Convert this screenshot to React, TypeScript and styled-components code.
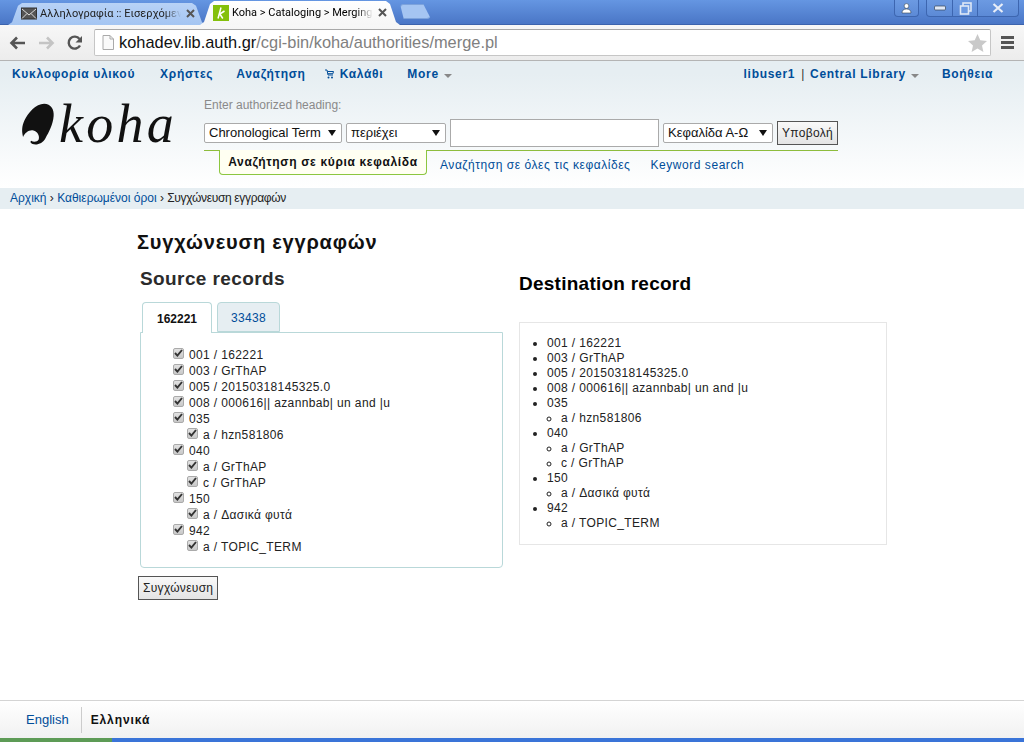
import React from "react";
import styled, { createGlobalStyle } from "styled-components";

const Global = createGlobalStyle`
  html, body { margin: 0; padding: 0; height: 100%; overflow: hidden; background: #fff; }
  body { font-family: "Liberation Sans", Arial, sans-serif; font-size: 12px; color: #000; }
  * { box-sizing: border-box; }
`;

const Page = styled.div`
  width: 1024px; height: 742px; display: flex; flex-direction: column; overflow: hidden;
`;

/* Browser chrome */
const TabStrip = styled.div`
  height: 25px; flex: none; display: flex; align-items: flex-end; padding-left: 8px;
  background: linear-gradient(#6596e2, #4a76c6); border-bottom: 1px solid #3c63ad;
  position: relative;
`;
const Tab = styled.div<{ $active?: boolean }>`
  height: ${p => (p.$active ? 24 : 22)}px; width: ${p => (p.$active ? 200 : 198)}px;
  margin-left: ${p => (p.$active ? -6 : 0)}px;
  margin-bottom: -1px; z-index: ${p => (p.$active ? 2 : 1)};
  padding: 0 ${p => (p.$active ? 12 : 10)}px 1px 13px;
  clip-path: polygon(0 100%, 4px 88%, 10px 12%, 14px 0, calc(100% - 14px) 0, calc(100% - 10px) 12%, calc(100% - 4px) 88%, 100% 100%);
  background: ${p => (p.$active ? "linear-gradient(#fff, #f6f6f6)" : "linear-gradient(#b8d2f6, #a4c5f2)")};
  display: flex; align-items: center; gap: 3px; color: ${p => (p.$active ? "#000" : "#222")};
`;
const TabTitle = styled.span`
  flex: 1; min-width: 0; white-space: nowrap; font-family: Roboto, sans-serif; font-size: 11px;
  -webkit-mask-image: linear-gradient(to right, #000 88%, transparent 100%);
  mask-image: linear-gradient(to right, #000 88%, transparent 100%);
`;
const TabClose = styled.span`
  flex: none; width: 12px; display: flex; align-items: center; justify-content: center;
`;
const NewTab = styled.div`
  width: 31px; height: 15px; margin: 0 0 5px 0; border-radius: 3px 3px 4px 4px;
  background: #a5c5f2; border: 1px solid #7da3dc;
  clip-path: polygon(0 0, 75% 0, 100% 100%, 12% 100%);
`;
const WinButtons = styled.div`
  position: absolute; right: 0; top: 0; display: flex; gap: 7px; padding-right: 5px;
`;
const WinGroup = styled.div`
  display: flex; height: 17px; border: 1px solid #3d66b0; border-top: 0; border-radius: 0 0 4px 4px;
  background: linear-gradient(#6c9ae2, #5c8ad6);
`;
const WinBtn = styled.div<{ $w: number }>`
  width: ${p => p.$w}px; display: flex; align-items: center; justify-content: center;
  & + & { border-left: 1px solid #3d66b0; }
`;

const Toolbar = styled.div`
  height: 36px; flex: none; display: flex; align-items: center;
  background: linear-gradient(#f7f7f7, #ececec); border-bottom: 1px solid #b4b4b4;
  padding: 0 9px 0 9px;
`;
const NavIcon = styled.div`
  width: 29px; height: 24px; display: flex; align-items: center; justify-content: flex-start;
`;
const Omnibox = styled.div`
  width: 897px; height: 27px; margin-left: -2px; display: flex; align-items: center;
  background: #fff; border: 1px solid #c6c6c6; border-top-color: #a8a8a8; border-radius: 2px;
  padding: 0 3px 0 7px; font-size: 16.4px;
`;
const UrlHost = styled.span`
  color: #111; margin-left: 5px;
`;
const UrlPath = styled.span`
  color: #808080; flex: 1;
`;
const Menu = styled.div`
  margin-left: 10px; width: 13px; display: flex; flex-direction: column; gap: 2px;
`;
const MenuBar = styled.i`
  display: block; height: 3px; background: #555;
`;

/* Koha header */
const HeaderWrap = styled.div`
  flex: none; height: 127px; background: linear-gradient(#e6eef2 0%, #e6eef2 10%, #ffffff 100%);
`;
const TopNav = styled.div`
  height: 26px; display: flex; align-items: center; padding: 0 31px 0 12px;
  font-weight: 700; font-size: 12px; letter-spacing: 0.7px;
`;
const TopLink = styled.a<{ $mr?: number }>`
  color: #004d99; text-decoration: none; margin-right: ${p => p.$mr ?? 0}px; white-space: nowrap;
  display: inline-flex; align-items: center;
`;
const Caret = styled.i`
  display: inline-block; width: 0; height: 0; margin: 3px 0 0 5px;
  border-left: 4px solid transparent; border-right: 4px solid transparent; border-top: 4px solid #888;
`;
const Spacer = styled.div`flex: 1;`;
const Pipe = styled.span`
  font-weight: 400; color: #333; margin: 0 5px 0 6px;
`;
const SearchArea = styled.div`
  display: flex; height: 101px;
`;
const LogoBox = styled.div`
  width: 204px; flex: none; display: flex; align-items: flex-start; padding: 16px 0 0 21px;
`;
const LogoText = styled.span`
  font-family: "Liberation Serif", serif; font-style: italic; font-size: 54px; line-height: 42px;
  letter-spacing: 3.3px; color: #111; margin-left: 4px;
`;
const SearchCol = styled.div`
  flex: none; width: 635px; display: flex; flex-direction: column;
`;
const SearchLabel = styled.div`
  color: #8a8a8a; font-size: 12px; padding-top: 10px; height: 25px; line-height: 16px;
`;
const SearchRow = styled.div`
  height: 38px; display: flex; align-items: center; padding-top: 4px; padding-bottom: 1px;
`;
const FakeSelect = styled.div<{ $w: number; $ml?: number }>`
  width: ${p => p.$w}px; height: 20px; margin-left: ${p => p.$ml ?? 0}px; flex: none;
  background: #fff; border: 1px solid #aaa; border-radius: 2px;
  display: flex; align-items: center; justify-content: space-between;
  padding: 0 5px 0 4px; font-size: 13px; white-space: nowrap; color: #111;
`;
const SelArrow = styled.i`
  width: 0; height: 0; border-left: 4px solid transparent; border-right: 4px solid transparent; border-top: 6px solid #111;
`;
const SearchInput = styled.div`
  width: 209px; height: 28px; margin-left: 4px; flex: none; background: #fff; border: 1px solid #aaa;
`;
const Button = styled.button<{ $ml?: number }>`
  height: 24px; margin-left: ${p => p.$ml ?? 0}px; padding: 0 4px; border: 1px solid #555; border-radius: 0;
  background: linear-gradient(#f9f9f9, #e4e4e4); font: 12px/1 "Liberation Sans", sans-serif; color: #222;
  letter-spacing: 0.3px; white-space: nowrap;
`;
const TabsLine = styled.div`
  display: flex; height: 26px; border-top: 1px solid #8dbc3c; margin-right: 1px; padding-left: 15px; border-radius: 0 0 4px 4px;
`;
const ActiveSearch = styled.div`
  width: 208px; height: 25px; margin-top: -1px; background: #fffff2; border: 1px solid #8cc63f; border-top: 0;
  border-radius: 0 0 4px 4px; font-weight: 700; font-size: 12px; letter-spacing: 0.66px; color: #111;
  display: flex; align-items: center; justify-content: center; white-space: nowrap;
`;
const SearchLink = styled.a<{ $ml: number }>`
  color: #004d99; margin-left: ${p => p.$ml}px; font-size: 12px; letter-spacing: 0.55px; line-height: 28px; white-space: nowrap;
`;

const Breadcrumb = styled.div`
  height: 21px; flex: none; background: #e6eef2; padding: 0 0 2px 10px; display: flex; align-items: center;
  font-size: 12px; color: #222; white-space: pre;
`;
const Crumb = styled.a`
  color: #004d99;
`;
const CrumbCurrent = styled.span`
  letter-spacing: -0.33px;
`;

/* Main */
const Main = styled.main`
  flex: 1; min-height: 0; padding: 20px 0 0 137px; position: relative;
`;
const H1 = styled.h1`
  margin: 0; font-size: 20px; line-height: 26px; font-weight: 700; color: #111; letter-spacing: 0.8px;
`;
const Columns = styled.div`
  display: flex; margin-top: 9px;
`;
const LeftCol = styled.div`
  width: 382px; flex: none;
`;
const RightCol = styled.div`
  width: 368px; flex: none;
`;
const H2Left = styled.h2`
  margin: 0 0 0 3px; font-size: 19px; line-height: 30px; font-weight: 700; color: #2b2b2b; letter-spacing: 0.4px;
`;
const H2Right = styled.h2`
  margin: 5px 0 0; font-size: 19px; line-height: 30px; font-weight: 700; color: #000; letter-spacing: 0.25px;
`;
const TabRow = styled.div`
  display: flex; gap: 5px; margin: 8px 0 0 5px; height: 31px; position: relative; z-index: 1;
`;
const RecTab = styled.div<{ $active?: boolean }>`
  height: ${p => (p.$active ? 31 : 30)}px; width: ${p => (p.$active ? 70 : 63)}px;
  padding-top: ${p => (p.$active ? 1 : 2)}px;
  border: 1px solid #b9d8d9; border-radius: 4px 4px 0 0; ${p => (p.$active ? "border-bottom: 0;" : "")}
  background: ${p => (p.$active ? "#fff" : "#e6eef2")};
  color: ${p => (p.$active ? "#111" : "#004d99")}; font-weight: ${p => (p.$active ? 700 : 400)};
  letter-spacing: ${p => (p.$active ? 0 : 0.3)}px;
  display: flex; align-items: center; justify-content: center; font-size: 12px;
`;
const TabPanel = styled.div`
  margin: -1px 0 0 3px; width: 363px; height: 236px; border: 1px solid #b9d8d9; border-radius: 0 0 4px 4px;
  padding: 14px 0 0 32px;
`;
const CheckRow = styled.div<{ $sub?: boolean }>`
  height: 16px; display: flex; align-items: center; padding-left: ${p => (p.$sub ? 14 : 0)}px;
  font-size: 12px; color: #222; white-space: pre; letter-spacing: 0.37px;
`;
const Check = styled.span`
  width: 11px; height: 11px; flex: none; margin: -4px 5px 0 0; border-radius: 2px; border: 1px solid #aaa;
  background: linear-gradient(#e2e2e2, #c8c8c8); display: flex; align-items: center; justify-content: center;
`;
const SubmitRow = styled.div`
  margin: 8px 0 0 1px;
`;
const RecordBox = styled.div`
  margin-top: 23px; width: 368px; height: 223px; border: 1px solid #e6e6e6; padding: 13px 0 0 27px;
`;
const UL = styled.ul`
  margin: 0; padding: 0; list-style: disc; font-size: 12px; line-height: 15px; color: #222; letter-spacing: 0.37px;
`;
const SubUL = styled.ul`
  margin: 0; padding: 0 0 0 14px; list-style: circle;
`;

const Footer = styled.footer`
  flex: none; height: 38px; display: flex; align-items: center; padding-left: 26px;
  background: linear-gradient(#fff, #f1f1f1); border-top: 1px solid #d4d4d4; font-size: 12px;
`;
const LangLink = styled.a`
  color: #004d99; padding-right: 12px; height: 26px; line-height: 26px; border-right: 1px solid #ccc; font-size: 13px;
`;
const LangCurrent = styled.b`
  margin-left: 9px; color: #111; letter-spacing: 0.9px;
`;
const Taskbar = styled.div`
  flex: none; height: 4px; display: flex; background: #3a74d8;
`;
const StartEdge = styled.div`
  width: 112px; background: #5d9b56;
`;

const CheckMark = () => (
  <svg width="9" height="8" viewBox="0 0 9 8"><path d="M1 4l2.400 2.600L8 1" fill="none" stroke="#333" strokeWidth="1.9" /></svg>
);
const CloseX = () => (
  <svg width="9" height="9" viewBox="0 0 9 9"><path d="M1 1l7 7M8 1L1 8" stroke="#555" strokeWidth="2" /></svg>
);

const fields: [string, boolean][] = [
  ["001 / 162221", false], ["003 / GrThAP", false], ["005 / 20150318145325.0", false],
  ["008 / 000616|| azannbab| un and |u", false], ["035", false], ["a / hzn581806", true],
  ["040", false], ["a / GrThAP", true], ["c / GrThAP", true], ["150", false],
  ["a / Δασικά φυτά", true], ["942", false], ["a / TOPIC_TERM", true],
];

const Mail = () => (
  <svg width="16" height="13" viewBox="0 0 16 13" style={{ flex: "none" }}>
    <rect x="0.5" y="1" width="15" height="11" fill="#555" stroke="#333" />
    <path d="M1 2l7 6 7-6M1 11.500l5-5M15 11.500l-5-5" fill="none" stroke="#ddd" />
  </svg>
);
const KohaFav = () => (
  <svg width="16" height="16" viewBox="0 0 16 16" style={{ flex: "none" }}>
    <rect width="16" height="16" fill="#84c00c" />
    <path d="M8 2.500L5 13.500M11.500 6L6.800 9l3 4.500" fill="none" stroke="#fff" strokeWidth="1.500" />
  </svg>
);

export default function App() {
  return (
    <Page>
      <Global />
      <TabStrip>
        <Tab><Mail /><TabTitle>Αλληλογραφία :: Εισερχόμεν</TabTitle><TabClose><CloseX /></TabClose></Tab>
        <Tab $active><KohaFav /><TabTitle>Koha &gt; Cataloging &gt; Merging r</TabTitle><TabClose><CloseX /></TabClose></Tab>
        <NewTab />
        <WinButtons>
          <WinGroup>
            <WinBtn $w={23}>
              <svg width="11" height="11" viewBox="0 0 11 11"><circle cx="5.500" cy="3" r="2.400" fill="#fff" stroke="#345" strokeWidth=".6" /><path d="M1 10c0-3 2-4 4.500-4s4.500 1 4.500 4z" fill="#fff" stroke="#345" strokeWidth=".6" /></svg>
            </WinBtn>
          </WinGroup>
          <WinGroup>
            <WinBtn $w={25}><svg width="12" height="6" viewBox="0 0 12 6"><rect x=".5" y="1" width="11" height="4" rx="1" fill="#dfe8f6" stroke="#345" strokeWidth=".7" /></svg></WinBtn>
            <WinBtn $w={25}><svg width="13" height="13" viewBox="0 0 13 13"><rect x="4" y="1" width="8" height="8" fill="none" stroke="#dfe8f6" strokeWidth="1.600" /><rect x="1.500" y="4" width="8" height="8" fill="#6c9ae2" stroke="#dfe8f6" strokeWidth="1.600" /></svg></WinBtn>
            <WinBtn $w={41}><svg width="12" height="10" viewBox="0 0 12 10"><path d="M1.500 1l9 8M10.500 1l-9 8" stroke="#e8eef8" strokeWidth="2.200" /></svg></WinBtn>
          </WinGroup>
        </WinButtons>
      </TabStrip>
      <Toolbar>
        <NavIcon>
          <svg width="17" height="14" viewBox="0 0 17 14"><path d="M8 1.500L2.500 7 8 12.500M3 7h13" fill="none" stroke="#555" strokeWidth="2.600" /></svg>
        </NavIcon>
        <NavIcon>
          <svg width="17" height="14" viewBox="0 0 17 14"><path d="M9 1.500L14.500 7 9 12.500M14 7H1" fill="none" stroke="#c4c4c4" strokeWidth="2.600" /></svg>
        </NavIcon>
        <NavIcon>
          <svg width="16" height="16" viewBox="0 0 16 16"><path d="M13 10.500A6 6 0 1 1 12.500 4" fill="none" stroke="#555" strokeWidth="2.400" /><path d="M15 1v6.500H8.500z" fill="#555" /></svg>
        </NavIcon>
        <Omnibox>
          <svg width="12" height="15" viewBox="0 0 12 15"><path d="M1 .5h7l3.500 3.500v10.500H1z" fill="#fafafa" stroke="#aaa" /><path d="M8 .5V4h3.500" fill="none" stroke="#aaa" /></svg>
          <UrlHost>kohadev.lib.auth.gr</UrlHost>
          <UrlPath>/cgi-bin/koha/authorities/merge.pl</UrlPath>
          <svg width="19" height="18" viewBox="0 0 19 18"><path d="M9.500 0l2.800 6.200 6.700.7-5 4.500 1.400 6.600-5.900-3.400L3.600 18 5 11.400 0 6.900l6.700-.7z" fill="#c9c9c9" /></svg>
        </Omnibox>
        <Menu><MenuBar /><MenuBar /><MenuBar /></Menu>
      </Toolbar>
      <HeaderWrap>
        <TopNav>
          <TopLink $mr={25}>Κυκλοφορία υλικού</TopLink>
          <TopLink $mr={23}>Χρήστες</TopLink>
          <TopLink $mr={19}>Αναζήτηση</TopLink>
          <TopLink $mr={24}>
            <svg width="9" height="10" viewBox="0 0 9 10" style={{ marginRight: 6 }}><path d="M0 1h2l1 5h5M2.500 2.500h6l-.6 2.200H3" fill="none" stroke="#004d99" /><circle cx="3.500" cy="8.500" r="1" fill="#004d99" /><circle cx="7" cy="8.500" r="1" fill="#004d99" /></svg>
            Καλάθι
          </TopLink>
          <TopLink>More<Caret /></TopLink>
          <Spacer />
          <TopLink>libuser1</TopLink>
          <Pipe>|</Pipe>
          <TopLink $mr={23}>Central Library<Caret /></TopLink>
          <TopLink>Βοήθεια</TopLink>
        </TopNav>
        <SearchArea>
          <LogoBox>
            <svg width="34" height="43" viewBox="24 12 100 132" preserveAspectRatio="none" style={{ flex: "none" }}>
              <path d="M92 14C112 14 122 32 120 52C118 78 106 102 96 120C88 136 72 142 58 138C52 136 50 130 54 128C60 132 72 132 76 124C80 114 72 98 58 96C46 95 36 104 30 116C26 100 26 84 34 66C44 42 68 14 92 14Z" fill="#111" />
            </svg>
            <LogoText>koha</LogoText>
          </LogoBox>
          <SearchCol>
            <SearchLabel>Enter authorized heading:</SearchLabel>
            <SearchRow>
              <FakeSelect $w={138}>Chronological Term<SelArrow /></FakeSelect>
              <FakeSelect $w={100} $ml={4}>περιέχει<SelArrow /></FakeSelect>
              <SearchInput />
              <FakeSelect $w={110} $ml={4}>Κεφαλίδα Α-Ω<SelArrow /></FakeSelect>
              <Button $ml={4}>Υποβολή</Button>
            </SearchRow>
            <TabsLine>
              <ActiveSearch>Αναζήτηση σε κύρια κεφαλίδα</ActiveSearch>
              <SearchLink $ml={13}>Αναζήτηση σε όλες τις κεφαλίδες</SearchLink>
              <SearchLink $ml={20}>Keyword search</SearchLink>
            </TabsLine>
          </SearchCol>
        </SearchArea>
      </HeaderWrap>
      <Breadcrumb>
        <Crumb>Αρχική</Crumb> › <Crumb>Καθιερωμένοι όροι</Crumb> › <CrumbCurrent>Συγχώνευση εγγραφών</CrumbCurrent>
      </Breadcrumb>
      <Main>
        <H1>Συγχώνευση εγγραφών</H1>
        <Columns>
          <LeftCol>
            <H2Left>Source records</H2Left>
            <TabRow>
              <RecTab $active>162221</RecTab>
              <RecTab>33438</RecTab>
            </TabRow>
            <TabPanel>
              {fields.map(([t, sub], i) => (
                <CheckRow key={i} $sub={sub}><Check><CheckMark /></Check>{t}</CheckRow>
              ))}
            </TabPanel>
            <SubmitRow><Button>Συγχώνευση</Button></SubmitRow>
          </LeftCol>
          <RightCol>
            <H2Right>Destination record</H2Right>
            <RecordBox>
              <UL>
                <li>001 / 162221</li>
                <li>003 / GrThAP</li>
                <li>005 / 20150318145325.0</li>
                <li>008 / 000616|| azannbab| un and |u</li>
                <li>035<SubUL><li>a / hzn581806</li></SubUL></li>
                <li>040<SubUL><li>a / GrThAP</li><li>c / GrThAP</li></SubUL></li>
                <li>150<SubUL><li>a / Δασικά φυτά</li></SubUL></li>
                <li>942<SubUL><li>a / TOPIC_TERM</li></SubUL></li>
              </UL>
            </RecordBox>
          </RightCol>
        </Columns>
      </Main>
      <Footer>
        <LangLink>English</LangLink>
        <LangCurrent>Ελληνικά</LangCurrent>
      </Footer>
      <Taskbar><StartEdge /></Taskbar>
    </Page>
  );
}
